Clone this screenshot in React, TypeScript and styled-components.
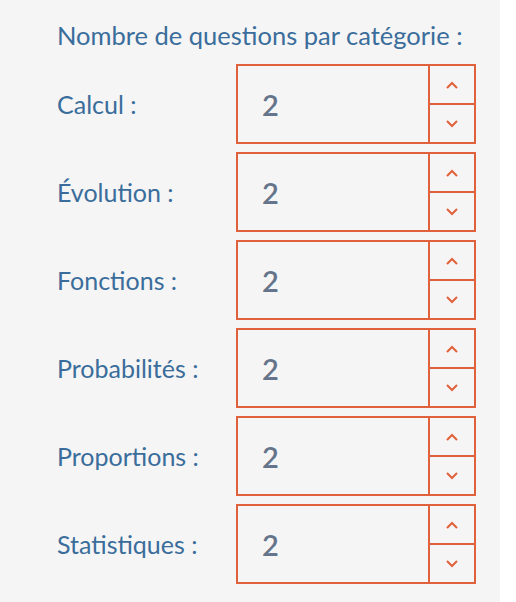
import { Fragment } from "react";
import styled, { createGlobalStyle } from "styled-components";

const GlobalStyle = createGlobalStyle`
  html, body {
    margin: 0;
    padding: 0;
    background: #ffffff;
  }
`;

const Panel = styled.div`
  width: 500px;
  min-height: 602px;
  box-sizing: border-box;
  background: #f5f5f5;
  padding: 19px 24px 0 57px;
  font-family: "Lato", "Source Sans Pro", sans-serif;
  font-weight: 400;
  color: #3a6d9b;
`;

const Heading = styled.div`
  font-size: 25.5px;
  line-height: 32px;
  margin-bottom: 13px;
  white-space: nowrap;
`;

const Rows = styled.div`
  display: grid;
  grid-template-columns: 179px 240px;
  row-gap: 8px;
`;

const Label = styled.label`
  font-size: 25px;
  display: flex;
  align-items: center;
  height: 80px;
`;

const Spinner = styled.div`
  display: flex;
  height: 80px;
  box-sizing: border-box;
  border: 2px solid #e0613b;
`;

const Value = styled.div`
  flex: 1;
  display: flex;
  align-items: center;
  padding-left: 24px;
  font-size: 29px;
  font-weight: 600;
  color: #64758b;
`;

const Stepper = styled.div`
  width: 44px;
  display: flex;
  flex-direction: column;
  border-left: 2px solid #e0613b;
`;

const StepButton = styled.button<{ $up?: boolean }>`
  flex: 1;
  display: flex;
  align-items: center;
  justify-content: center;
  padding: 0;
  background: transparent;
  border: none;
  border-bottom: ${(p) => (p.$up ? "2px solid #e0613b" : "none")};
  cursor: pointer;
`;

const Chevron = ({ up }: { up?: boolean }) => (
  <svg width="12" height="8" viewBox="0 0 12 8">
    <path
      d={up ? "M1 7 L6 2 L11 7" : "M1 1 L6 6 L11 1"}
      fill="none"
      stroke="#e0613b"
      strokeWidth="2"
    />
  </svg>
);

const categories = [
  "Calcul",
  "Évolution",
  "Fonctions",
  "Probabilités",
  "Proportions",
  "Statistiques",
];

export default function App() {
  return (
    <>
      <GlobalStyle />
      <Panel>
        <Heading>Nombre de questions par catégorie :</Heading>
        <Rows>
          {categories.map((name) => (
            <Fragment key={name}>
              <Label>{name} :</Label>
              <Spinner>
                <Value>2</Value>
                <Stepper>
                  <StepButton $up aria-label="Augmenter">
                    <Chevron up />
                  </StepButton>
                  <StepButton aria-label="Diminuer">
                    <Chevron />
                  </StepButton>
                </Stepper>
              </Spinner>
            </Fragment>
          ))}
        </Rows>
      </Panel>
    </>
  );
}
